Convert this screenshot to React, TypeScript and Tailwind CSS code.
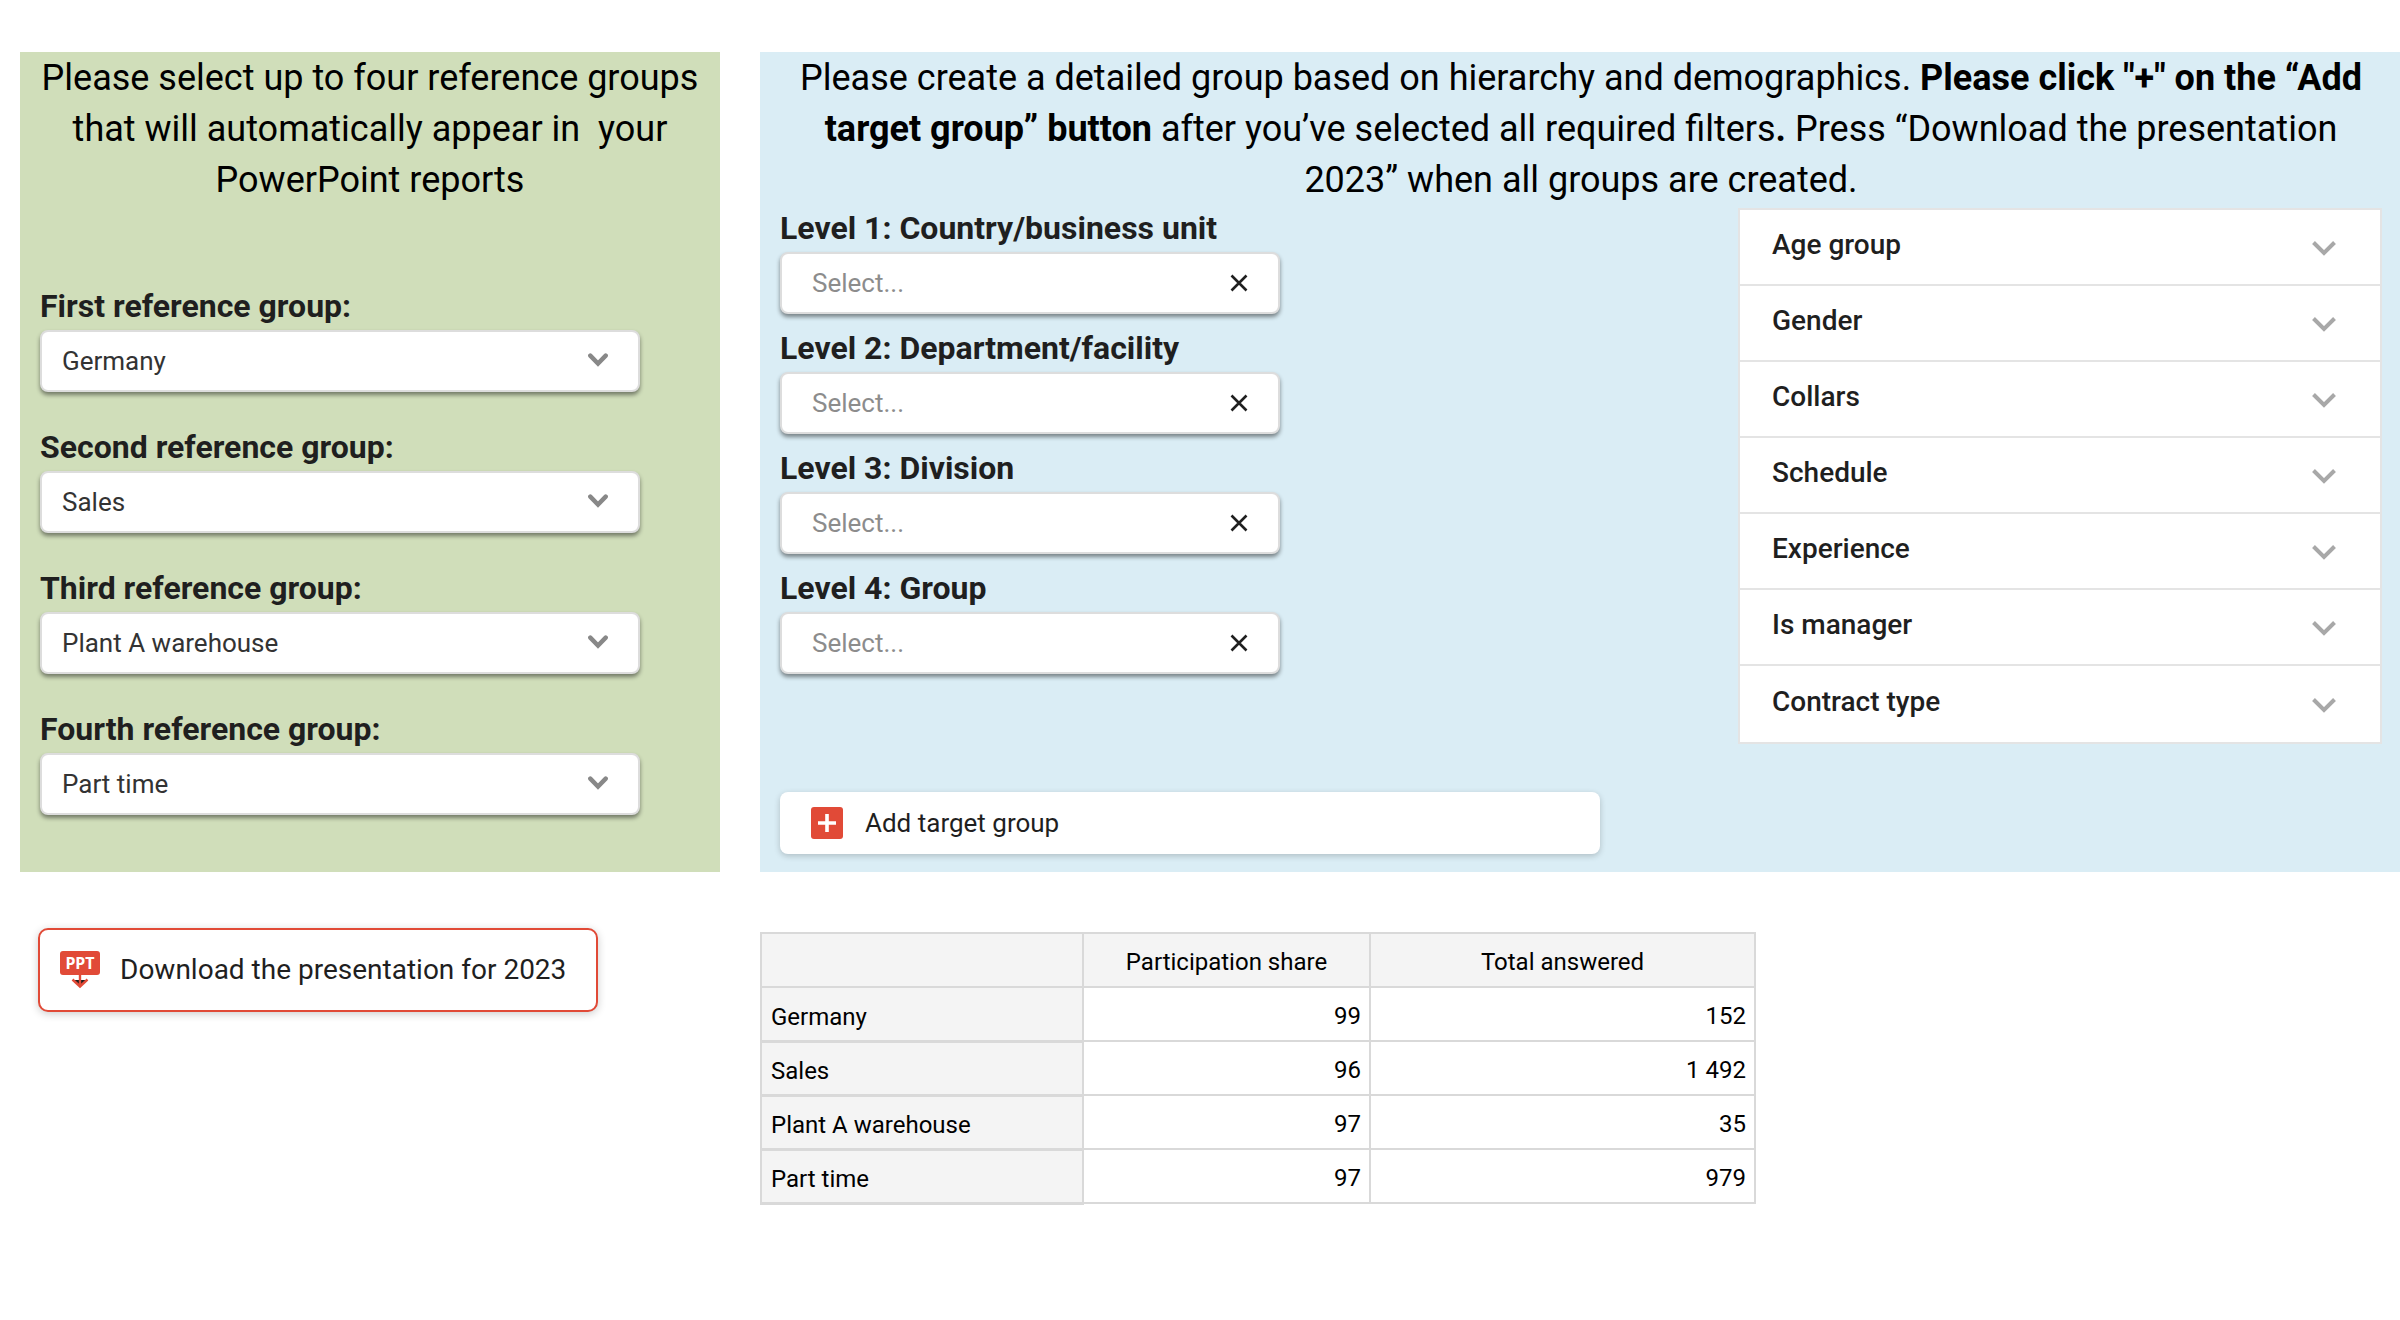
import { useState } from "react";

const referenceGroups = [
  { id: "first", label: "First reference group:", value: "Germany" },
  { id: "second", label: "Second reference group:", value: "Sales" },
  { id: "third", label: "Third reference group:", value: "Plant A warehouse" },
  { id: "fourth", label: "Fourth reference group:", value: "Part time" },
];
const groupOptions = ["Germany", "Sales", "Plant A warehouse", "Part time"];

const levels = [
  "Level 1: Country/business unit",
  "Level 2: Department/facility",
  "Level 3: Division",
  "Level 4: Group",
];

const filters = ["Age group", "Gender", "Collars", "Schedule", "Experience", "Is manager", "Contract type"];

const rows = [
  { name: "Germany", share: "99", total: "152" },
  { name: "Sales", share: "96", total: "1 492" },
  { name: "Plant A warehouse", share: "97", total: "35" },
  { name: "Part time", share: "97", total: "979" },
];

function GroupSelect({ id, label, value }: { id: string; label: string; value: string }) {
  return (
    <div>
      <label htmlFor={id} className="block pb-1 text-[32px] leading-10 font-bold text-[#1f1f1f]">
        {label}
      </label>
      <div className="relative w-10/11">
        <select
          id={id}
          defaultValue={value}
          className="block h-[62px] w-full appearance-none rounded-lg border-2 border-[#dddddd] bg-white pl-5 text-[26px] text-[#333333] shadow-[0_3px_4px_rgba(0,0,0,0.45)]"
        >
          {groupOptions.map((o) => (
            <option key={o}>{o}</option>
          ))}
        </select>
        <svg
          className="pointer-events-none absolute top-[23px] right-8 h-4 w-5"
          viewBox="0 0 20 16"
          fill="none"
          stroke="#888888"
          strokeWidth="4.4"
          strokeLinecap="round"
        >
          <path d="M2.3 2.6 L10 10.6 L17.7 2.6" />
        </svg>
      </div>
    </div>
  );
}

function LevelField({ label, id }: { label: string; id: string }) {
  const [text, setText] = useState("");
  return (
    <div>
      <label htmlFor={id} className="block pb-1 text-[32px] leading-10 font-bold text-[#1f1f1f]">
        {label}
      </label>
      <div className="flex h-[62px] w-full max-w-[500px] items-center rounded-lg border-2 border-[#dddddd] bg-white pr-[29px] pl-[30px] shadow-[0_3px_4px_rgba(0,0,0,0.45)]">
        <input
          id={id}
          value={text}
          onChange={(e) => setText(e.target.value)}
          placeholder="Select..."
          className="min-w-0 flex-1 bg-transparent text-[26px] text-[#333333] outline-none placeholder:text-[#8c8c8c]"
        />
        <button type="button" aria-label={"Clear " + label} onClick={() => setText("")}>
          <svg className="size-5" viewBox="0 0 20 20" stroke="#1f1f1f" strokeWidth="2.6" fill="none">
            <path d="M2.5 2.5 L17.5 17.5 M17.5 2.5 L2.5 17.5" />
          </svg>
        </button>
      </div>
    </div>
  );
}

export default function App() {
  return (
    <main className="bg-white pt-[52px] pl-5 font-['Roboto',sans-serif]">
      <div className="grid grid-cols-[35fr_82fr] gap-x-10">
        <section className="bg-[#d0deba] px-[10px] pt-px pb-[57px]">
          <p className="text-center text-[36px] leading-[51px] text-black">
            Please select up to four reference groups that will automatically appear in&nbsp; your PowerPoint reports
          </p>
          <div className="mt-[80px] flex flex-col gap-[35px] px-[10px]">
            {referenceGroups.map((g) => (
              <GroupSelect key={g.id} {...g} />
            ))}
          </div>
        </section>

        <section className="flex flex-col bg-[#daedf5] pt-px pr-[18px] pb-[18px] pl-5">
          <p className="text-center text-[36px] leading-[51px] text-black">
            Please create a detailed group based on hierarchy and demographics.{" "}
            <b>Please click "+" on the “Add target group” button</b> after you’ve selected all required filters
            <b>.</b> Press “Download the presentation 2023” when all groups are created.
          </p>
          <div className="mt-[2px] grid grid-cols-[958fr_644fr]">
            <div className="flex flex-col gap-[14px]">
              {levels.map((l, i) => (
                <LevelField key={l} id={"level" + (i + 1)} label={l} />
              ))}
            </div>
            <div>
              <div className="divide-y-2 divide-[#e4e4e4] border-2 border-[#e4e4e4] bg-white">
                {filters.map((f) => (
                  <button
                    key={f}
                    type="button"
                    className="flex h-[76px] w-full items-center justify-between pr-11 pb-1 pl-8 text-[28px] leading-9 font-medium text-[#1f1f1f]"
                  >
                    <span>{f}</span>
                    <svg className="mt-1.5 h-4 w-6" viewBox="0 0 24 16" fill="none" stroke="#a8a8a8" strokeWidth="4">
                      <path d="M1.5 2.5 L12 13 L22.5 2.5" />
                    </svg>
                  </button>
                ))}
              </div>
            </div>
          </div>
          <button
            type="button"
            className="mt-auto flex h-[62px] w-full max-w-[820px] items-center gap-[22px] rounded-lg bg-white pl-[31px] text-[26px] text-[#1f1f1f] shadow-[0_2px_6px_rgba(0,0,0,0.2)]"
          >
            <svg className="size-8" viewBox="0 0 32 32">
              <rect width="32" height="32" rx="3" fill="#e14a37" />
              <path d="M16 7 V25 M7 16 H25" stroke="white" strokeWidth="3.6" />
            </svg>
            <span>Add target group</span>
          </button>
        </section>

        <div className="pt-14 pl-[18px]">
          <button
            type="button"
            className="flex h-[84px] w-full max-w-[560px] items-center gap-5 rounded-[10px] border-2 border-[#e14a37] bg-white px-5 text-[28px] whitespace-nowrap text-[#1f1f1f] shadow-[0_2px_8px_rgba(0,0,0,0.2)]"
          >
            <svg className="h-[38px] w-10" viewBox="0 0 40 38">
              <rect width="40" height="24" rx="3" fill="#e14a37" />
              <text
                x="20"
                y="18"
                textAnchor="middle"
                fontFamily="Noto Sans"
                fontWeight="700"
                fontSize="16"
                fill="white"
              >
                PPT
              </text>
              <path d="M14 29 H26 L20 35 Z" fill="#1f1f1f" />
              <path d="M20 24 V35 M12.5 28.5 L20 35.5 L27.5 28.5" stroke="#e14a37" strokeWidth="2.4" fill="none" />
            </svg>
            <span>Download the presentation for 2023</span>
          </button>
        </div>

        <div className="pt-[60px]">
          <table className="w-full max-w-[996px] table-fixed border-collapse text-[24px] leading-8 text-black">
            <colgroup>
              <col className="w-[322px]" />
              <col className="w-[287px]" />
              <col />
            </colgroup>
            <thead>
              <tr className="h-[54px] bg-[#f4f4f4]">
                <td className="border-2 border-[#d9d9d9]"></td>
                <th scope="col" className="border-2 border-[#d9d9d9] pt-1 font-normal">Participation share</th>
                <th scope="col" className="border-2 border-[#d9d9d9] pt-1 font-normal">Total answered</th>
              </tr>
            </thead>
            <tbody>
              {rows.map((r) => (
                <tr key={r.name} className="h-[54px]">
                  <th scope="row" className="border-2 border-b-3 border-[#d9d9d9] bg-[#f4f4f4] pt-1.5 pl-[9px] text-left font-normal">
                    {r.name}
                  </th>
                  <td className="border-2 border-[#d9d9d9] pt-1 pr-2 text-right">{r.share}</td>
                  <td className="border-2 border-[#d9d9d9] pt-1 pr-2 text-right">{r.total}</td>
                </tr>
              ))}
            </tbody>
          </table>
        </div>
      </div>
    </main>
  );
}
